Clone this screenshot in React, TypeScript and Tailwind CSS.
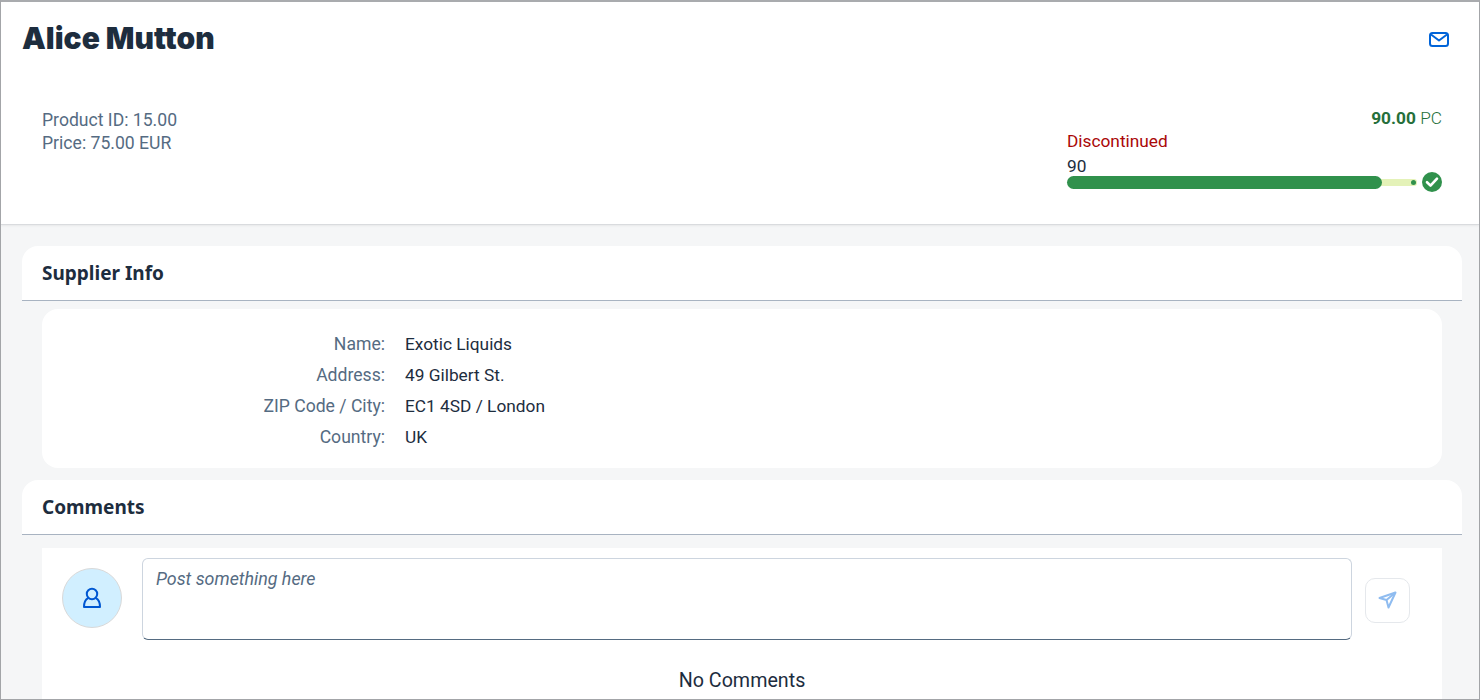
export default function App() {
  const rows = [
    ["Name:", "Exotic Liquids"],
    ["Address:", "49 Gilbert St."],
    ["ZIP Code / City:", "EC1 4SD / London"],
    ["Country:", "UK"],
  ];
  return (
    <div className="relative h-[700px] w-[1480px] overflow-hidden border-x border-b border-t-2 border-x-[#a3a5a8] border-b-[#a3a5a8] border-t-[#a9abae] bg-[#f5f6f7] font-['Roboto',sans-serif] text-[17.3px] text-[#1d2d3e]">
      <header className="h-[223px] border-b border-[#d9dbde] bg-white pl-[21px] pr-[37px] shadow-[0_1px_2px_rgba(0,0,0,0.06)]">
        <div className="flex items-start justify-between pt-[17px]">
          <h1 className="font-['Inter',sans-serif] text-[30px] leading-[38px] font-black">Alice Mutton</h1>
          <svg className="mt-[13px] mr-[-7px]" width="20" height="15" viewBox="0 0 20 15" fill="none" stroke="#0064d9" strokeWidth="2" strokeLinejoin="round">
            <rect x="1" y="1" width="18" height="13" rx="2.5" />
            <path d="M2 2.5 L10 8.5 L18 2.5" />
          </svg>
        </div>
        <div className="flex items-start justify-between pt-[50px] pl-[20px]">
          <div className="pt-[2px] text-[17.6px] leading-[23px] text-[#556b82]">
            <div>Product ID: 15.00</div>
            <div>Price: 75.00 EUR</div>
          </div>
          <div className="w-[375px]">
            <div className="h-[23px] text-right leading-[23px] text-[#256f3a]">
              <span className="font-bold">90.00</span> <span className="font-light">PC</span>
            </div>
            <div className="leading-[22px] text-[#aa0808]">Discontinued</div>
            <div className="leading-[24px] mt-[2px] h-[21px]">90</div>
            <div className="mt-[-3px] flex items-center">
              <div className="relative z-10 h-[13px] w-[315px] rounded-full bg-[#30914c]" />
              <div className="relative ml-[-6px] h-[7px] w-[41px] rounded-r-[3px] bg-[#e4f2b8]">
                <div className="absolute top-[1px] right-[1px] h-[5px] w-[5px] rounded-full bg-[#30914c]" />
              </div>
              <svg className="ml-[5px]" width="20" height="20" viewBox="0 0 20 20">
                <circle cx="10" cy="10" r="10" fill="#30914c" />
                <path d="M5 10.2 L8.5 13.6 L15 6.6" fill="none" stroke="#fff" strokeWidth="2.6" strokeLinecap="round" strokeLinejoin="round" />
              </svg>
            </div>
          </div>
        </div>
      </header>

      <div className="pl-[21px] pr-[17px] pt-[21px]">
        <section>
          <h2 className="flex h-[55px] items-center rounded-t-[16px] border-b border-[#a8b3c1] bg-white pl-[20px] font-['Noto_Sans',sans-serif] text-[19px] font-bold">Supplier Info</h2>
          <div className="mx-[20px] mt-[8px] h-[159px] rounded-[16px] bg-white pt-[19px]">
            {rows.map(([k, v]) => (
              <div key={k} className="flex h-[31px] leading-[32px]">
                <div className="w-[343px] text-right text-[17.6px] text-[#556b82]">{k}</div>
                <div className="pl-[20px] text-[17.3px]">{v}</div>
              </div>
            ))}
          </div>
        </section>
        <section className="mt-[12px]">
          <h2 className="flex h-[55px] items-center rounded-t-[16px] border-b border-[#a8b3c1] bg-white pl-[20px] font-['Noto_Sans',sans-serif] text-[19px] font-bold">Comments</h2>
          <div className="mx-[20px] mt-[13px] h-[160px] bg-white">
            <div className="flex items-center pt-[10px]">
              <div className="mb-[2px] ml-[20px] flex h-[60px] w-[60px] items-center justify-center rounded-full border border-[#d9d9d9] bg-[#d1efff]">
                <svg width="20" height="22" viewBox="0 0 20 22" fill="none" stroke="#0057d2" strokeWidth="2" strokeLinejoin="round">
                  <circle cx="10" cy="7" r="5.2" />
                  <path d="M6 11.2 C3.5 12.6 2 15.5 2 20 H18 C18 15.5 16.5 12.6 14 11.2" />
                </svg>
              </div>
              <div className="ml-[20px] h-[82px] w-[1210px] rounded-[6px] border border-[#cdd5df] border-b-[#556b81] px-[13px] pt-[9px] text-[17.85px] leading-[22px] text-[#556b82] italic">Post something here</div>
              <div className="mt-[2px] ml-[13px] flex h-[45px] w-[45px] items-center justify-center rounded-[10px] border border-[#e5e8ec]">
                <svg width="19" height="18" viewBox="0 0 19 18" fill="none" stroke="#8fbcf0" strokeWidth="2" strokeLinejoin="round">
                  <path d="M1.5 7 L17.5 1.5 L10.5 16.5 L8.5 9 Z" />
                  <path d="M8.5 9 L17.5 1.5" />
                </svg>
              </div>
            </div>
            <div className="mt-[29px] text-center text-[19.7px] leading-[24px] text-[#1d2d3e]">No Comments</div>
          </div>
        </section>
      </div>
    </div>
  );
}
